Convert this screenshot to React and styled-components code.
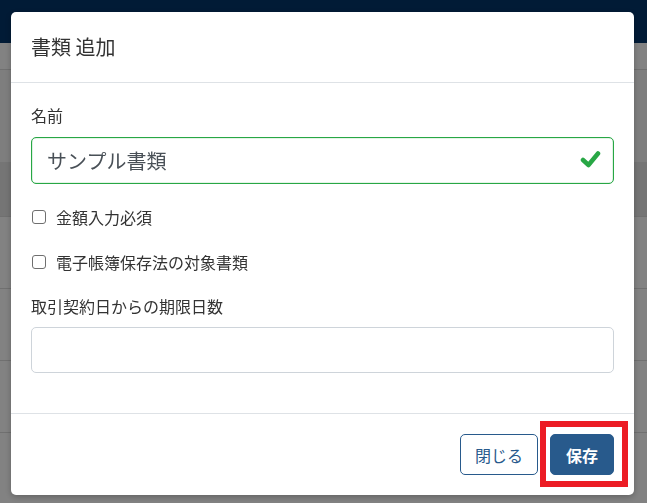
import React from "react";
import styled, { createGlobalStyle } from "styled-components";

const Global = createGlobalStyle`
  html, body { margin: 0; padding: 0; }
  body {
    width: 647px;
    height: 503px;
    overflow: hidden;
    background: #ffffff;
    font-family: "Noto Sans CJK JP", "Noto Sans", sans-serif;
  }
  * { box-sizing: border-box; }
`;

const Page = styled.div`
  display: flex;
  flex-direction: column;
  width: 647px;
  height: 503px;
  background: #fff;
`;

const NavBar = styled.div`
  height: 43px;
  background: #03356a;
  flex-shrink: 0;
`;

const TableRow = styled.div`
  height: ${(p) => p.$h}px;
  flex-shrink: 0;
  background: ${(p) => p.$bg || "#ffffff"};
  border-bottom: 1px solid ${(p) => (p.$line ? "#dcdcdc" : "transparent")};
`;

const Backdrop = styled.div`
  position: fixed;
  inset: 0;
  background: rgba(0, 0, 0, 0.49);
  display: flex;
  align-items: flex-start;
  justify-content: flex-start;
  padding: 12px 0 0 11px;
`;

const Dialog = styled.div`
  width: 623px;
  background: #fff;
  border-radius: 5px;
  box-shadow: 0 2px 6px rgba(0, 0, 0, 0.25);
  display: flex;
  flex-direction: column;
`;

const Header = styled.div`
  padding: 20px;
  border-bottom: 1px solid #dee2e6;
`;

const Title = styled.h5`
  margin: 0;
  font-size: 20px;
  line-height: 30px;
  font-weight: 400;
  color: #333;
`;

const Body = styled.div`
  display: flex;
  flex-direction: column;
  padding: 20px 20px 40px;
`;

const Label = styled.div`
  font-size: 16px;
  line-height: 24px;
  color: #333;
  margin-top: ${(p) => p.$mt || 0}px;
  margin-bottom: ${(p) => p.$mb || 0}px;
`;

const InputWrap = styled.div`
  position: relative;
`;

const TextInput = styled.div`
  height: ${(p) => p.$h}px;
  border: 1px solid #ced4da;
  border-radius: 5px;
  padding: 0 50px 0 15px;
  display: flex;
  align-items: center;
  font-size: 20px;
  color: #495057;
  background: #fff;
`;

const ValidInput = styled(TextInput)`
  border: 1px solid #28a745;
  box-shadow: inset 0 0 0 0.3px rgba(40, 167, 69, 0.5);
`;

const ValidIcon = styled.svg`
  position: absolute;
  right: 13px;
  top: 13px;
  width: 21px;
  height: 18px;
`;

const CheckRow = styled.div`
  display: flex;
  align-items: center;
  gap: 10px;
  margin-top: 21px;
  font-size: 16px;
  line-height: 24px;
  color: #333;
`;

const CheckBox = styled.span`
  width: 14px;
  height: 14px;
  margin-left: 1px;
  border: 1px solid #6f6f6f;
  border-radius: 3px;
  background: #fff;
  flex-shrink: 0;
`;

const Footer = styled.div`
  display: flex;
  justify-content: flex-end;
  align-items: center;
  gap: 12px;
  padding: 20px;
  border-top: 1px solid #dee2e6;
`;

const Button = styled.button`
  position: relative;
  height: 41px;
  padding: 0 ${(p) => (p.$primary ? 15 : 14)}px;
  border-radius: 5px;
  border: 1px solid #285a8c;
  background: ${(p) => (p.$primary ? "#285a8c" : "#ffffff")};
  color: ${(p) => (p.$primary ? "#ffffff" : "#285a8c")};
  font-family: "Noto Sans CJK JP", "Noto Sans", sans-serif;
  font-size: 16px;
  font-weight: ${(p) => (p.$primary ? 600 : 400)};
  line-height: 1;
  cursor: pointer;
`;

const Highlight = styled.span`
  position: absolute;
  left: -11px;
  top: -14px;
  width: 88px;
  height: 66px;
  border: 6px solid #ec1c24;
  pointer-events: none;
`;

export default function App() {
  return (
    <>
      <Global />
      <Page>
        <NavBar />
        <TableRow $h={27} $bg="#ffffff" $line />
        <TableRow $h={92} $bg="#f8f8f8" />
        <TableRow $h={55} $bg="#e6e6e6" $line />
        <TableRow $h={72} $line />
        <TableRow $h={72} $line />
        <TableRow $h={72} $line />
        <TableRow $h={72} />
      </Page>
      <Backdrop>
        <Dialog>
          <Header>
            <Title>書類 追加</Title>
          </Header>
          <Body>
            <Label $mb={10}>名前</Label>
            <InputWrap>
              <ValidInput $h={47}>サンプル書類</ValidInput>
              <ValidIcon viewBox="0 0 21 18">
                <polyline
                  points="3,10 8.5,15 18,3.5"
                  fill="none"
                  stroke="#28a745"
                  strokeWidth="4.5"
                  strokeLinecap="round"
                  strokeLinejoin="round"
                />
              </ValidIcon>
            </InputWrap>
            <CheckRow>
              <CheckBox />
              金額入力必須
            </CheckRow>
            <CheckRow>
              <CheckBox />
              電子帳簿保存法の対象書類
            </CheckRow>
            <Label $mt={20} $mb={9}>
              取引契約日からの期限日数
            </Label>
            <TextInput $h={46} />
          </Body>
          <Footer>
            <Button>閉じる</Button>
            <Button $primary>
              保存
              <Highlight />
            </Button>
          </Footer>
        </Dialog>
      </Backdrop>
    </>
  );
}
